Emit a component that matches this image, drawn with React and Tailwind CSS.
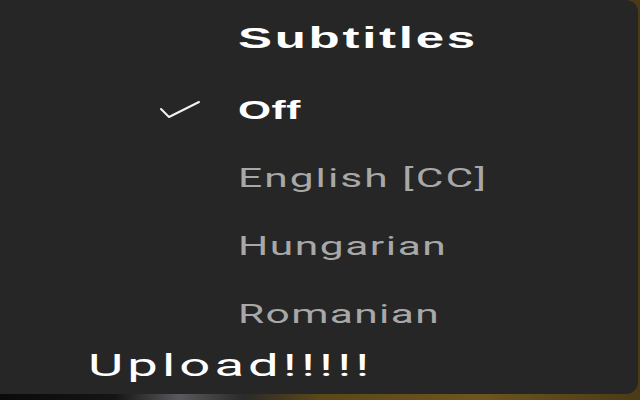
// Subtitles picker sheet, stretched the way the capture is
const items = [
  { label: 'Off', active: true, track: 'tracking-[0.3px]' },
  { label: 'English [CC]', active: false, track: 'tracking-[1.2px]' },
  { label: 'Hungarian', active: false, track: 'tracking-[0.9px]' },
  { label: 'Romanian', active: false, track: 'tracking-[0.8px]' },
]

function Check() {
  return (
    <svg width="40" height="20" viewBox="0 0 40 20" fill="none" className="block">
      <path d="M1 9 L9 17 L39 2" stroke="#f2f2f2" strokeWidth="2" strokeLinecap="round" strokeLinejoin="round" />
    </svg>
  )
}

export default function App() {
  return (
    <div
      className="w-[640px] h-[400px] overflow-hidden flex flex-col bg-[linear-gradient(90deg,#0a0a0a_0%,#151515_18%,#5a5a5e_28%,#2a2a2a_38%,#5c4718_50%,#6e5520_75%,#4a3a16_100%)]"
      style={{ fontFamily: '"Liberation Sans", Arial, sans-serif' }}
    >
      <div className="h-[394px] w-[638px] bg-[#262626] rounded-r-[12px] flex flex-col shrink-0">
        {/* Title */}
        <div className="h-[76px] flex items-center pl-[238px]">
          <span className="inline-block origin-left scale-x-[1.7] text-[30px] font-bold text-white tracking-[1.6px] leading-none">
            Subtitles
          </span>
        </div>

        {/* Options */}
        {items.map((it) => (
          <div key={it.label} className="h-[68px] flex items-center">
            <div className="w-[238px] flex justify-end pr-[38px]">
              {it.active && <Check />}
            </div>
            <span
              className={`inline-block origin-left scale-x-[1.7] leading-none ${it.track} ${
                it.active
                  ? 'text-[25px] font-bold text-white'
                  : "text-[25px] font-normal text-[#a8a8a8] font-['Roboto',sans-serif]"
              }`}
            >
              {it.label}
            </span>
          </div>
        ))}

        {/* Upload */}
        <div className="h-[40px] flex items-center pl-[88px] -mt-[3px]">
          <span className="inline-block origin-left scale-x-[1.7] text-[32px] font-normal text-white tracking-[2.4px] leading-none font-['Roboto',sans-serif]">
            Upload!!!!!
          </span>
        </div>
      </div>
    </div>
  )
}
